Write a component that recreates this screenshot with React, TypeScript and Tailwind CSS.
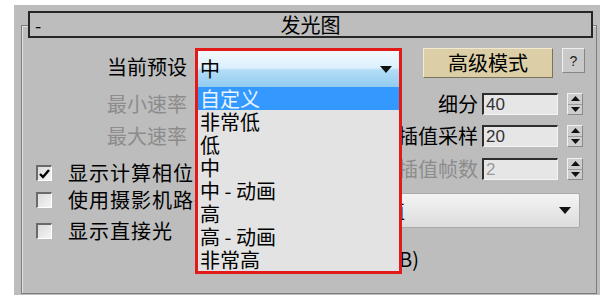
import React from "react";

const cjk = "font-['Noto_Sans_CJK_SC','Liberation_Sans',sans-serif]";

function DownArrow() {
  return (
    <svg width="12" height="7" viewBox="0 0 12 7">
      <path d="M0 0h12L6 7z" fill="#111" />
    </svg>
  );
}

function Spinner() {
  return (
    <div className="flex h-[22px] w-[16px] flex-col border border-t-[#f2f2f2] border-l-[#f2f2f2] border-r-[#8a8a8a] border-b-[#8a8a8a] bg-[#cdcdcd]">
      <div className="flex flex-1 items-center justify-center border-b border-[#9a9a9a]">
        <svg width="9" height="5" viewBox="0 0 9 5">
          <path d="M0 5h9L4.5 0z" fill="#111" />
        </svg>
      </div>
      <div className="flex flex-1 items-center justify-center">
        <svg width="9" height="5" viewBox="0 0 9 5">
          <path d="M0 0h9L4.5 5z" fill="#111" />
        </svg>
      </div>
    </div>
  );
}

function NumField({ label, value, disabled }: { label: string; value: string; disabled?: boolean }) {
  return (
    <div className="flex h-[22px] items-center pr-[13px]">
      <div
        className={`flex-1 whitespace-nowrap text-right text-[20px] leading-none ${
          disabled ? "text-[#8c8c8c]" : "text-black"
        }`}
      >
        {label}
      </div>
      <div
        className={`ml-[4px] flex h-[22px] w-[76px] shrink-0 items-center border-t-2 border-l-2 border-t-[#2e2e2e] border-l-[#2e2e2e] border-b border-r border-b-[#f4f4f4] border-r-[#f4f4f4] bg-[#e6e6e6] pl-[2px] font-['Liberation_Sans',sans-serif] text-[17px] leading-none ${
          disabled ? "text-[#9a9a9a]" : "text-[#333]"
        }`}
      >
        {value}
      </div>
      <div className="ml-[9px] shrink-0">
        <Spinner />
      </div>
    </div>
  );
}

function Check({ label, checked }: { label: string; checked?: boolean }) {
  return (
    <div className="flex h-[22px] items-center whitespace-nowrap pl-[14px]">
      <div className="flex h-[16px] w-[16px] shrink-0 items-center justify-center border-t-2 border-l-2 border-t-[#6a6a6a] border-l-[#6a6a6a] border-b border-r border-b-white border-r-white bg-gradient-to-br from-[#dcdcdc] to-[#f4f4f4]">
        {checked && (
          <svg width="11" height="10" viewBox="0 0 11 10">
            <path d="M1 5l3 3 6-7" stroke="#000" strokeWidth="2.4" fill="none" />
          </svg>
        )}
      </div>
      <span className="ml-[16px] text-[20px] leading-none tracking-[1px] text-black">{label}</span>
    </div>
  );
}

const presets = ["自定义", "非常低", "低", "中", "中 - 动画", "高", "高 - 动画", "非常高"];

export default function App() {
  return (
    <div className={`h-[307px] w-[611px] overflow-hidden bg-white pl-[14px] pt-[5px] ${cjk}`}>
      <div className="h-[290px] w-[586px] bg-[#bdbdbd] pl-[7px] pt-[20px]">
        <div className="relative h-[269px] w-[576px] border border-[#7c7c7c] shadow-[inset_1px_1px_0_#e2e2e2]">
          {/* title bar */}
          <div className="-mt-[15px] ml-[6px] flex h-[27px] w-[565px] items-center border-2 border-[#262626] bg-[#bdbdbd] px-[5px]">
            <span className="w-[10px] text-[18px] leading-none text-black">-</span>
            <span className="flex-1 pr-[10px] text-center text-[20px] leading-none text-black">发光图</span>
          </div>

          <div className="relative mt-[10px]">
            {/* row 1 */}
            <div className="flex h-[39px] items-start">
              <div className="mt-[9px] w-[165px] text-right text-[20px] leading-none text-black">当前预设</div>
              <div className="ml-[8px] w-[207px]" />
              <div className="ml-[21px] flex h-[30px] w-[130px] items-center justify-center border border-t-[#f3ead2] border-l-[#f3ead2] border-r-[#7d7256] border-b-[#7d7256] bg-[#dccfa8] text-[20px] leading-none text-black">
                高级模式
              </div>
              <div className="ml-[9px] flex h-[25px] w-[23px] items-center justify-center border border-t-[#efefef] border-l-[#efefef] border-r-[#858585] border-b-[#858585] bg-[#c9c9c9] font-['Liberation_Sans',sans-serif] text-[14px] leading-none text-[#222]">
                ?
              </div>
            </div>

            <div className="mt-[6px] flex">
              {/* left column */}
              <div className="w-[173px] shrink-0">
                <div className="flex h-[22px] items-center justify-end pr-[8px] text-[20px] leading-none text-[#8c8c8c]">
                  最小速率
                </div>
                <div className="mt-[10px] flex h-[22px] items-center justify-end pr-[8px] text-[20px] leading-none text-[#8c8c8c]">
                  最大速率
                </div>
                <div className="mt-[15px]">
                  <Check label="显示计算相位" checked />
                </div>
                <div className="mt-[5px]">
                  <Check label="使用摄影机路径" />
                </div>
                <div className="mt-[9px]">
                  <Check label="显示直接光" />
                </div>
              </div>

              {/* right column */}
              <div className="w-[401px]">
                <NumField label="细分" value="40" />
                <div className="mt-[10px]">
                  <NumField label="插值采样" value="20" />
                </div>
                <div className="mt-[11px]">
                  <NumField label="插值帧数" value="2" disabled />
                </div>
                <div className="ml-[5px] mt-[13px] flex h-[35px] w-[380px] items-center justify-between rounded-[2px] border border-[#a9a9a9] bg-gradient-to-b from-[#f4f4f4] to-[#dcdcdc] pl-[4px] pr-[8px] text-[20px] leading-none text-black">
                  <span className="whitespace-nowrap">单帧模式光照贴图插值</span>
                  <DownArrow />
                </div>
                <div className="mt-[21px] w-[224px] whitespace-nowrap text-right text-[20px] leading-none text-black">
                  0 采样; 0 字节 (0.0 MB)
                </div>
              </div>
            </div>

            {/* open preset dropdown */}
            <div className="absolute left-[173px] top-0 z-10 w-[207px] border-[3px] border-[#e21a1a] bg-[#e3e3e3]">
              <div className="flex h-[36px] items-center justify-between bg-[linear-gradient(#f1f9fe_0%,#dcf0fc_47%,#b3ddf7_53%,#92ccef_100%)] pl-[2px] pr-[7px] text-[20px] leading-none text-black">
                <span>中</span>
                <DownArrow />
              </div>
              {presets.map((p, i) => (
                <div
                  key={p}
                  className={`h-[23px] whitespace-nowrap pl-[2px] text-[20px] leading-[23px] ${
                    i === 0 ? "bg-[#3399ff] text-[#eaf4ff]" : "text-black"
                  }`}
                >
                  {p}
                </div>
              ))}
            </div>
          </div>
        </div>
      </div>
    </div>
  );
}
